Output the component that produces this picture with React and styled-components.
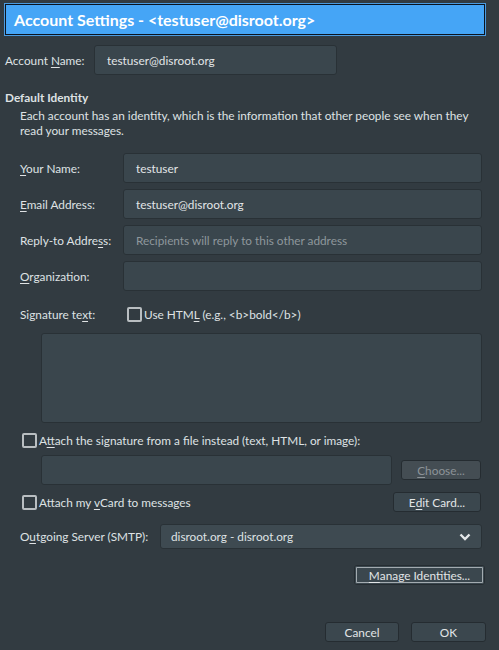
import React from 'react'
import styled, { createGlobalStyle } from 'styled-components'

const Global = createGlobalStyle`
  html, body {
    margin: 0;
    padding: 0;
    background: #323b41;
  }
  body {
    font-family: Lato, "Noto Sans", sans-serif;
    font-size: 11.8px;
    color: #dfe2e4;
  }
`

const Chevron = () => (
  <svg width="12" height="8" viewBox="0 0 12 8">
    <path d="M1.5 1.5 L6 6 L10.5 1.5" fill="none" stroke="#e4e7e9" strokeWidth="2.4" />
  </svg>
)

const App = () => {
  return (
    <Window>
      <Global />
      <TitleBar>Account Settings - &lt;testuser@disroot.org&gt;</TitleBar>

      <AccountRow>
        <Label w={89}>Account <u>N</u>ame:</Label>
        <Field w={243}>testuser@disroot.org</Field>
      </AccountRow>

      <SectionTitle>Default Identity</SectionTitle>
      <Description>
        Each account has an identity, which is the information that other people see when they
        <br />read your messages.
      </Description>

      <Identity>
        <Row>
          <Label w={103}><u>Y</u>our Name:</Label>
          <Field grow>testuser</Field>
        </Row>
        <Row>
          <Label w={103}><u>E</u>mail Address:</Label>
          <Field grow>testuser@disroot.org</Field>
        </Row>
        <Row>
          <Label w={103}>Reply-to Addre<u>s</u>s:</Label>
          <Field grow placeholder>Recipients will reply to this other address</Field>
        </Row>
        <Row>
          <Label w={103}><u>O</u>rganization:</Label>
          <Field grow />
        </Row>

        <SigRow>
          <Label w={107}>Signature te<u>x</u>t:</Label>
          <Check>
            <Box />
            <span>Use HTM<u>L</u> (e.g., &lt;b&gt;bold&lt;/b&gt;)</span>
          </Check>
        </SigRow>
        <TextArea />

        <AttachRow>
          <Check>
            <Box />
            <span>A<u>t</u>tach the signature from a file instead (text, HTML, or image):</span>
          </Check>
        </AttachRow>
        <FileRow>
          <Field w={351} />
          <Button disabled w={80}><u>C</u>hoose...</Button>
        </FileRow>

        <VCardRow>
          <Check>
            <Box />
            <span>Attach my <u>v</u>Card to messages</span>
          </Check>
          <Button w={88}>E<u>d</u>it Card...</Button>
        </VCardRow>

        <ServerRow>
          <Label w={140}>O<u>u</u>tgoing Server (SMTP):</Label>
          <Select>
            <span>disroot.org - disroot.org</span>
            <Chevron />
          </Select>
        </ServerRow>
      </Identity>

      <ManageRow>
        <Button w={131} focused><u>M</u>anage Identities...</Button>
      </ManageRow>

      <Footer>
        <Button w={74}>Cancel</Button>
        <Button w={75}>OK</Button>
      </Footer>
    </Window>
  )
}

export default App

const Window = styled.div`
  height: 650px;
  display: flex;
  flex-direction: column;
  overflow: hidden;
  & > * {
    flex: none;
  }
  u {
    text-decoration: underline;
    text-underline-offset: 2px;
  }
`

const TitleBar = styled.div`
  margin: 3px 0 0 4px;
  width: 482px;
  height: 33px;
  box-sizing: border-box;
  border: 1px solid #4a9be0;
  box-shadow: inset 0 0 0 1px #0b1420;
  background: #45a5f6;
  color: #ffffff;
  font-size: 16px;
  font-weight: 700;
  display: flex;
  align-items: center;
  padding-left: 9px;
  padding-bottom: 1px;
`

const AccountRow = styled.div`
  display: flex;
  align-items: center;
  margin-top: 9px;
  padding-left: 5px;
`

const Label = styled.div`
  width: ${p => p.w}px;
  flex: none;
  white-space: nowrap;
`

const Field = styled.div`
  box-sizing: border-box;
  height: 30px;
  ${p => (p.grow ? 'flex: 1;' : `width: ${p.w}px; flex: none;`)}
  background: #3a464d;
  border: 1px solid #293136;
  border-radius: 3px;
  display: flex;
  align-items: center;
  padding-left: 12px;
  color: ${p => (p.placeholder ? '#8e979c' : '#e2e5e7')};
  white-space: nowrap;
`

const SectionTitle = styled.div`
  margin-top: 15px;
  padding-left: 5px;
  font-weight: 700;
  line-height: 15px;
`

const Description = styled.div`
  margin-top: 3px;
  padding-left: 20px;
  line-height: 15px;
  white-space: nowrap;
`

const Identity = styled.div`
  margin-top: 15px;
  padding: 0 17px 0 20px;
  display: flex;
  flex-direction: column;
`

const Row = styled.div`
  display: flex;
  align-items: center;
  margin-bottom: 6px;
`

const SigRow = styled.div`
  display: flex;
  align-items: center;
  height: 22px;
  margin-top: 6px;
`

const Check = styled.label`
  display: flex;
  align-items: center;
  gap: 2px;
  white-space: nowrap;
`

const Box = styled.span`
  width: 15px;
  height: 15px;
  box-sizing: border-box;
  border: 2px solid #b9bec1;
  border-radius: 2px;
  background: #323b41;
  flex: none;
`

const TextArea = styled.div`
  margin: 8px 0 0 21px;
  height: 90px;
  box-sizing: border-box;
  background: #3a464d;
  border: 1px solid #293136;
  border-radius: 3px;
`

const AttachRow = styled.div`
  display: flex;
  align-items: center;
  height: 18px;
  margin: 8px 0 0 2px;
`

const FileRow = styled.div`
  display: flex;
  align-items: center;
  justify-content: space-between;
  margin: 6px 1px 0 21px;
`

const Button = styled.div`
  box-sizing: border-box;
  width: ${p => p.w}px;
  height: 20px;
  flex: none;
  display: flex;
  align-items: center;
  justify-content: center;
  border-radius: 3px;
  border: 1px solid #252c31;
  background: ${p => (p.disabled ? '#444d53' : '#3b474e')};
  color: ${p => (p.disabled ? '#8c9398' : '#e2e5e7')};
  box-shadow: ${p => (p.focused ? 'inset 0 0 0 1px #3b474e, inset 0 0 0 2px #a3abb0' : 'none')};
  white-space: nowrap;
`

const VCardRow = styled.div`
  display: flex;
  align-items: center;
  justify-content: space-between;
  margin: 7px 1px 0 2px;
`

const ServerRow = styled.div`
  display: flex;
  align-items: center;
  margin-top: 12px;
`

const Select = styled.div`
  flex: 1;
  height: 25px;
  box-sizing: border-box;
  background: #3e4a51;
  border: 1px solid #293136;
  border-radius: 3px;
  display: flex;
  align-items: center;
  justify-content: space-between;
  padding: 0 10px 0 10px;
`

const ManageRow = styled.div`
  display: flex;
  justify-content: flex-end;
  margin-top: 16px;
  padding-right: 14px;
`

const Footer = styled.div`
  display: flex;
  justify-content: flex-end;
  gap: 12px;
  margin-top: 37px;
  padding-right: 13px;
`
